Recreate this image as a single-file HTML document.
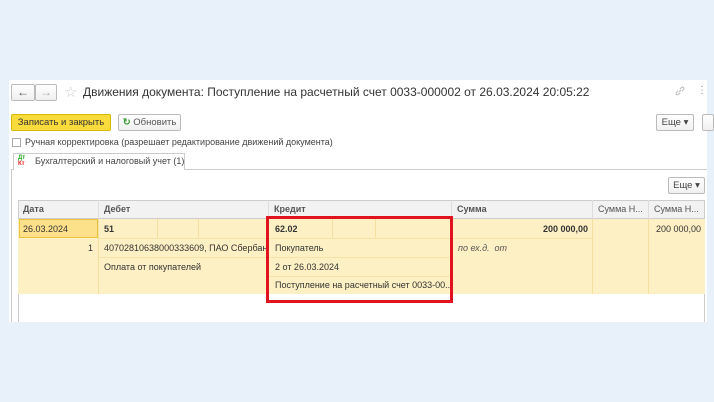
<!DOCTYPE html>
<html><head><meta charset="utf-8"><style>
*{box-sizing:border-box;margin:0;padding:0}
body{width:714px;height:402px;background:#e8f1fa;font-family:"Liberation Sans",Arial,sans-serif;position:relative;overflow:hidden;color:#333}
.a{position:absolute}
.panel{left:9px;top:80px;width:698px;height:242px;background:#fff}
.btn{position:absolute;border:1px solid #bbb;border-radius:2px;background:linear-gradient(#fff,#f0f0f0);font-size:9.5px;color:#444;text-align:center;line-height:15px}
.t{position:absolute;font-size:9px;white-space:nowrap;overflow:hidden}
.row{position:absolute;left:18px;width:687px;background:#fdf0c4}
.hl{position:absolute;height:1px;background:#f5e3a8}
.vl{position:absolute;width:1px;background:#f3e0a0}
</style></head><body>
<div class="a panel"></div>
<div class="btn" style="left:11px;top:84px;width:24px;height:17px;font-size:12px;line-height:14px;color:#555">&#8592;</div>
<div class="btn" style="left:35px;top:84px;width:22px;height:17px;font-size:12px;line-height:14px;color:#aaa">&#8594;</div>
<div class="a" style="left:64px;top:83px;font-size:15px;color:#ccc">&#9734;</div>
<div class="a" style="left:83px;top:85px;font-size:12px;color:#333">Движения документа: Поступление на расчетный счет 0033-000002 от 26.03.2024 20:05:22</div>
<svg class="a" style="left:675px;top:86px" width="10" height="10" viewBox="0 0 10 10" fill="none" stroke="#bbb" stroke-width="1"><path d="M4 6L6 4M3 5L1.5 6.5a1.4 1.4 0 0 0 2 2L5 7M5 3l1.5-1.5a1.4 1.4 0 0 1 2 2L7 5"/></svg>
<div class="a" style="left:697px;top:85px;font-size:10px;color:#888">&#8942;</div>
<div class="btn" style="left:11px;top:114px;width:100px;height:17px;background:#f9dc3c;border-color:#d8b800;color:#333">Записать и закрыть</div>
<div class="btn" style="left:118px;top:114px;width:63px;height:17px;color:#555"><span style="color:#3a9d3a;font-weight:bold">&#8635;</span> Обновить</div>
<div class="btn" style="left:656px;top:114px;width:38px;height:17px">Еще ▾</div>
<div class="btn" style="left:702px;top:114px;width:12px;height:17px"></div>
<div class="a" style="left:12px;top:138px;width:9px;height:9px;border:1px solid #aaa;background:#fff"></div>
<div class="t" style="left:25px;top:137px;color:#444">Ручная корректировка (разрешает редактирование движений документа)</div>
<div class="a" style="left:11px;top:169px;width:696px;height:1px;background:#ccc"></div>
<div class="a" style="left:11px;top:169px;width:1px;height:153px;background:#ccc"></div>
<div class="a" style="left:13px;top:153px;width:172px;height:17px;border:1px solid #ccc;border-bottom:none;background:#fff"></div>
<div class="a" style="left:18px;top:155px;font-size:6px;line-height:6px;color:#2a2;font-weight:bold">Дт<br><span style="color:#d22">Кт</span></div>
<div class="t" style="left:35px;top:156px;color:#444">Бухгалтерский и налоговый учет (1)</div>
<div class="btn" style="left:668px;top:177px;width:37px;height:17px">Еще ▾</div>
<div class="a" style="left:18px;top:200px;width:687px;height:122px;border:1px solid #ccc;border-bottom:none;background:#fff"></div>
<div class="a" style="left:18px;top:200px;width:687px;height:19px;background:#f2f2f2;border:1px solid #ccc"></div>
<div class="t" style="left:23px;top:204px;font-weight:bold;color:#555">Дата</div>
<div class="t" style="left:104px;top:204px;font-weight:bold;color:#555">Дебет</div>
<div class="t" style="left:274px;top:204px;font-weight:bold;color:#555">Кредит</div>
<div class="t" style="left:457px;top:204px;font-weight:bold;color:#555">Сумма</div>
<div class="t" style="left:598px;top:204px;color:#555">Сумма Н...</div>
<div class="t" style="left:654px;top:204px;color:#555">Сумма Н...</div>
<div class="a" style="left:98px;top:200px;width:1px;height:19px;background:#ddd"></div>
<div class="a" style="left:268px;top:200px;width:1px;height:19px;background:#ddd"></div>
<div class="a" style="left:451px;top:200px;width:1px;height:19px;background:#ddd"></div>
<div class="a" style="left:592px;top:200px;width:1px;height:19px;background:#ddd"></div>
<div class="a" style="left:648px;top:200px;width:1px;height:19px;background:#ddd"></div>
<div class="row" style="top:219px;height:75px"></div>
<div class="a" style="left:19px;top:219px;width:79px;height:19px;background:#fde08a;border:1px solid #f0c040"></div>
<div class="hl" style="left:98px;top:238px;width:353px"></div>
<div class="hl" style="left:98px;top:257px;width:353px"></div>
<div class="hl" style="left:268px;top:276px;width:183px"></div>
<div class="hl" style="left:451px;top:238px;width:141px"></div>
<div class="vl" style="left:98px;top:219px;height:75px"></div>
<div class="vl" style="left:157px;top:219px;height:19px"></div>
<div class="vl" style="left:198px;top:219px;height:19px"></div>
<div class="vl" style="left:268px;top:219px;height:75px"></div>
<div class="vl" style="left:332px;top:219px;height:19px"></div>
<div class="vl" style="left:375px;top:219px;height:19px"></div>
<div class="vl" style="left:451px;top:219px;height:75px"></div>
<div class="vl" style="left:592px;top:219px;height:75px"></div>
<div class="vl" style="left:648px;top:219px;height:75px"></div>
<div class="t" style="left:23px;top:224px">26.03.2024</div>
<div class="t" style="left:88px;top:243px">1</div>
<div class="t" style="left:104px;top:224px;font-weight:bold">51</div>
<div class="t" style="left:104px;top:243px;width:163px">40702810638000333609, ПАО Сбербанк</div>
<div class="t" style="left:104px;top:262px">Оплата от покупателей</div>
<div class="t" style="left:275px;top:224px;font-weight:bold">62.02</div>
<div class="t" style="left:275px;top:243px">Покупатель</div>
<div class="t" style="left:275px;top:262px">2 от 26.03.2024</div>
<div class="t" style="left:275px;top:280px">Поступление на расчетный счет 0033-00...</div>
<div class="t" style="left:543px;top:224px;font-weight:bold">200 000,00</div>
<div class="t" style="left:458px;top:243px;font-style:italic;color:#555">по ех.д.&nbsp; от</div>
<div class="t" style="left:656px;top:224px">200 000,00</div>
<div class="a" style="left:266px;top:216px;width:187px;height:87px;border:3px solid #e0141e"></div>
</body></html>
